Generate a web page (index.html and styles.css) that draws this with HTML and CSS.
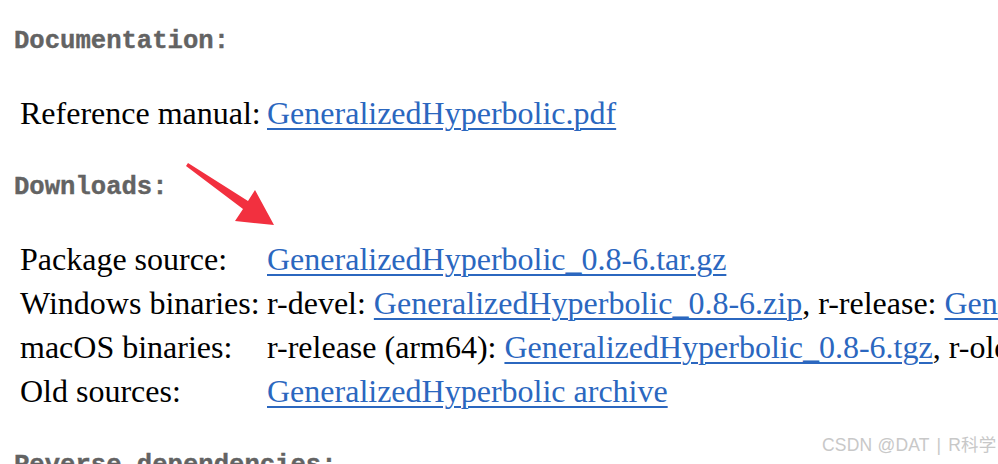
FILE: index.html
```html
<!DOCTYPE html>
<html>
<head>
<meta charset="utf-8">
<link rel="stylesheet" href="styles.css">
</head>
<body>
<main class="page">
  <h4 class="section-title first">Documentation:</h4>
  <div class="info-table">
    <div class="label">Reference manual:</div>
    <div class="value"><a href="#">GeneralizedHyperbolic.pdf</a></div>
  </div>

  <h4 class="section-title">Downloads:</h4>
  <div class="info-table">
    <div class="label">Package source:</div>
    <div class="value"><a href="#">GeneralizedHyperbolic_0.8-6.tar.gz</a></div>
    <div class="label">Windows binaries:</div>
    <div class="value">r-devel: <a href="#">GeneralizedHyperbolic_0.8-6.zip</a>, r-release: <a href="#">GeneralizedHyperbolic_0.8-6.zip</a>, r-oldrel: <a href="#">GeneralizedHyperbolic_0.8-6.zip</a></div>
    <div class="label">macOS binaries:</div>
    <div class="value">r-release (arm64): <a href="#">GeneralizedHyperbolic_0.8-6.tgz</a>, r-oldrel (arm64): <a href="#">GeneralizedHyperbolic_0.8-6.tgz</a></div>
    <div class="label">Old sources:</div>
    <div class="value"><a href="#">GeneralizedHyperbolic archive</a></div>
  </div>

  <h4 class="section-title">Reverse dependencies:</h4>
</main>

<svg class="arrow" width="100" height="75" viewBox="0 0 100 75" aria-hidden="true">
  <path d="M4 3 L6 0 L66 38 L73 27 L92 62 L53 58 L61 46 Z" fill="#f2303f"/>
</svg>

<div class="watermark">CSDN @DAT <span class="sep">|</span> R科学</div>
</body>
</html>
```

FILE: styles.css
```css
html, body {
  margin: 0;
  padding: 0;
  background: #ffffff;
}

body {
  width: 998px;
  height: 464px;
  overflow: hidden;
  position: relative;
}

.page {
  padding: 27px 0 0 14px;
  white-space: nowrap;
  overflow: hidden;
}

.section-title {
  font-family: "Liberation Mono", "Courier New", monospace;
  font-weight: bold;
  font-size: 25.6px;
  line-height: 30px;
  color: #636363;
  margin: 38px 0 34px 0;
  -webkit-text-stroke: 0.4px #636363;
}

.section-title.first {
  margin-top: 0;
}

.info-table {
  display: grid;
  grid-template-columns: 238px auto;
  column-gap: 9px;
  margin-left: 6px;
  font-family: "Liberation Serif", "Times New Roman", serif;
  font-size: 32px;
  line-height: 44px;
  color: #000000;
}

.info-table .label,
.info-table .value {
  white-space: nowrap;
}

.info-table a {
  color: #2b67bf;
  text-decoration: underline;
  text-decoration-thickness: 2px;
  text-underline-offset: 4px;
}

.arrow {
  position: absolute;
  left: 182px;
  top: 163px;
}

.watermark {
  position: absolute;
  left: 822px;
  top: 433px;
  font-family: "Liberation Sans", Arial, "Noto Sans CJK SC", sans-serif;
  font-size: 17.5px;
  line-height: 24px;
  color: #c8c8c8;
  white-space: nowrap;
  letter-spacing: 0.2px;
}

.watermark .sep {
  margin: 0 2px;
}
```
